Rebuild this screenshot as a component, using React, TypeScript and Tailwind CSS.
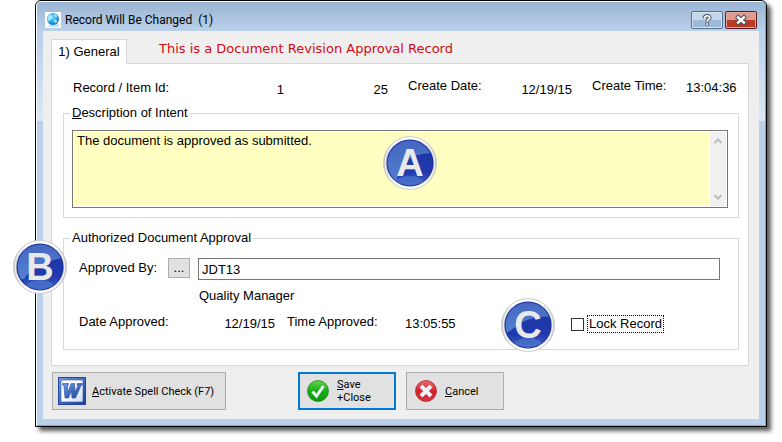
import React from 'react';

const Badge: React.FC<{ letter: string; place: string; gloss: string }> = ({ letter, place, gloss }) => {
    return (
        <div className={`absolute w-14 h-14 flex items-center justify-center ${place}`}>
            <svg className="absolute inset-0 w-full h-full" viewBox="0 0 56 56" aria-hidden="true">
                <defs>
                    <linearGradient id={`ring-${letter}`} x1="0" y1="0" x2="1" y2="0">
                        <stop offset="0" stopColor="#b4b4b4" />
                        <stop offset="0.25" stopColor="#f4f4f4" />
                        <stop offset="0.75" stopColor="#f4f4f4" />
                        <stop offset="1" stopColor="#b4b4b4" />
                    </linearGradient>
                    <linearGradient id={`disc-${letter}`} x1="0" y1="0" x2="0" y2="1">
                        <stop offset="0" stopColor="#1d37a6" />
                        <stop offset="0.7" stopColor="#2039ac" />
                        <stop offset="1" stopColor="#3f62c4" />
                    </linearGradient>
                    <linearGradient id={`gloss-${letter}`} x1="0" y1="0" x2="0" y2="1">
                        <stop offset="0" stopColor="#4264bd" />
                        <stop offset="1" stopColor="#5480d0" />
                    </linearGradient>
                    <clipPath id={`clip-${letter}`}>
                        <circle cx="28" cy="28" r="22.5" />
                    </clipPath>
                </defs>
                <circle cx="28" cy="28" r="26.5" fill={`url(#ring-${letter})`} stroke="#cfcfcf" strokeWidth="1" />
                <circle cx="28" cy="28" r="24.8" fill="none" stroke="#ffffff" strokeOpacity="0.7" strokeWidth="1.4" />
                <circle cx="28" cy="28" r="23.5" fill="#1a2f9c" />
                <circle cx="28" cy="28" r="22.5" fill={`url(#disc-${letter})`} />
                <g clipPath={`url(#clip-${letter})`}>
                    <path d={gloss} fill={`url(#gloss-${letter})`} />
                    <ellipse cx="28" cy="49" rx="15" ry="8" fill="#4a70cb" opacity="0.8" />
                </g>
            </svg>
            <span className="relative font-bold text-[38px] leading-9 text-[#e9e9ec]">{letter}</span>
        </div>
    );
};

const GlobeIcon = () => (
    <svg className="w-4 h-4 shrink-0 bg-white" viewBox="0 0 16 16" aria-hidden="true">
        <defs>
            <radialGradient id="globe" cx="0.4" cy="0.35" r="0.7">
                <stop offset="0" stopColor="#7fe6ff" />
                <stop offset="0.6" stopColor="#1fa4ea" />
                <stop offset="1" stopColor="#0a62b8" />
            </radialGradient>
        </defs>
        <ellipse cx="9" cy="13.5" rx="6" ry="1.8" fill="#bfe2f5" />
        <circle cx="8" cy="7" r="6" fill="url(#globe)" />
        <path d="M3 5c2-3 4-2 4 0S5 8 4 9 2 7 3 5zM9 2c2 0 4 2 3 3s-3 0-3-3zM9 8c2-1 4 0 3 2s-3 2-3-2z" fill="#c9f5ff" opacity="0.7" />
    </svg>
);

const WordIcon = () => (
    <svg className="w-7 h-7 shrink-0" viewBox="0 0 28 28" aria-hidden="true">
        <defs>
            <linearGradient id="word" x1="0" y1="0" x2="1" y2="1">
                <stop offset="0" stopColor="#6f9be6" />
                <stop offset="1" stopColor="#1b3f94" />
            </linearGradient>
            <linearGradient id="paper" x1="0" y1="0" x2="1" y2="1">
                <stop offset="0.4" stopColor="#ffffff" />
                <stop offset="1" stopColor="#c9d8f3" />
            </linearGradient>
        </defs>
        <rect width="28" height="28" fill="#1f469c" />
        <rect x="1" y="1" width="26" height="26" fill="url(#word)" />
        <rect x="3" y="3" width="22" height="22" fill="url(#paper)" stroke="#2a55ad" strokeWidth="0.6" />
        <path d="M4.500 6.500h6v1.500H9.400l.4 7L13.200 6.500h3.300l.6 8.500L20.300 8H19V6.500h5.500V8h-1.300L17.500 21H14l-.6-7L10.500 21H7L5.800 8H4.500z" fill="url(#word)" stroke="#274f9f" strokeWidth="0.6" />
    </svg>
);

const CheckIcon = () => (
    <svg className="w-[22px] h-[22px] shrink-0" viewBox="0 0 22 22" aria-hidden="true">
        <defs>
            <linearGradient id="green" x1="0" y1="0" x2="0" y2="1">
                <stop offset="0" stopColor="#5fd84c" />
                <stop offset="0.55" stopColor="#14a914" />
                <stop offset="1" stopColor="#0f9a10" />
            </linearGradient>
        </defs>
        <circle cx="11" cy="11" r="10.500" fill="url(#green)" stroke="#1c8f1c" strokeWidth="0.8" />
        <path d="M5.500 11.500l4 4.500L16.500 6" fill="none" stroke="#f0f3fb" strokeWidth="3" />
    </svg>
);

const CrossIcon = () => (
    <svg className="w-[22px] h-[22px] shrink-0" viewBox="0 0 22 22" aria-hidden="true">
        <defs>
            <linearGradient id="red" x1="0" y1="0" x2="0" y2="1">
                <stop offset="0" stopColor="#ea6a6c" />
                <stop offset="0.55" stopColor="#cf2128" />
                <stop offset="1" stopColor="#d8363b" />
            </linearGradient>
        </defs>
        <circle cx="11" cy="11" r="10.500" fill="url(#red)" stroke="#b3262b" strokeWidth="0.8" />
        <path d="M6 6l10 10M16 6l-10 10" stroke="#eef2fb" strokeWidth="4" />
    </svg>
);

export default function App() {
    return (
        <div className="min-h-screen bg-white pl-[35px] pr-[15px] pb-4 text-[13px] leading-4 text-black font-['Liberation_Sans',Arial,sans-serif]">
            <div className="relative rounded-t-md border border-black bg-white pl-px pt-px shadow-[4px_4px_4px_rgba(0,0,0,0.65)]">
                <div className="rounded-t-sm border-r border-b border-[#3cc3e0] px-1.5 pb-1.5 bg-[linear-gradient(to_bottom,#9ab4d2_0px,#b9d1ea_29px,#b9d1ea_31px,#dce8f5_119px,#b9d1ea_119px)]">
                    <header className="flex h-[29px] items-center gap-1 pl-0.5 pr-0.5 pt-1.5">
                        <GlobeIcon />
                        <h1 className="grow whitespace-pre text-[12px] leading-4 font-['Roboto','Open_Sans',sans-serif]">{'Record Will Be Changed  (1)'}</h1>
                        <button aria-label="Help" className="flex h-[18px] w-8 items-center justify-center rounded-xs border border-[#56718f] bg-linear-to-b from-[#c3d6ea] from-50% to-[#9db9d8] to-50% shadow-[inset_0_0_0_1px_#d5e3f1]">
                            <svg className="w-3 h-3" viewBox="0 0 12 12" fill="none">
                                <path d="M3.500 4.200C3.500 1 8.800 1 8.800 3.800C8.800 5.600 6.200 5.500 6.200 7.500M6.200 8.500v3" stroke="#4c5560" strokeWidth="3.600" />
                                <path d="M3.500 4.200C3.500 1 8.800 1 8.800 3.800C8.800 5.600 6.200 5.500 6.200 7.500M6.200 9.200v1.700" stroke="#ffffff" strokeWidth="1.700" />
                            </svg>
                        </button>
                        <button aria-label="Close" className="-ml-0.5 flex h-[18px] w-8 items-center justify-center rounded-xs border border-[#5b1a22] bg-linear-to-b from-[#dd9a8e] from-50% to-[#b93a24] to-50% shadow-[inset_0_0_0_1px_#e3aaa0]">
                            <svg className="w-3 h-3" viewBox="0 0 12 12" fill="none">
                                <path d="M1.500 2l9 8M10.500 2l-9 8" stroke="#4b4f5e" strokeWidth="4.400" />
                                <path d="M2.200 2.600l7.600 6.800M9.800 2.600l-7.600 6.800" stroke="#ffffff" strokeWidth="2.600" />
                            </svg>
                        </button>
                    </header>

                    <div className="bg-[#efefef] pl-2 pr-2.5 pt-2 pb-[9px]">
                        <div className="flex items-start">
                            <button role="tab" aria-selected="true" className="-mb-px h-[25px] w-[76px] shrink-0 border border-b-0 border-[#d9d9d9] bg-white text-center">
                                1) General
                            </button>
                            <p className="ml-8 text-[13px] leading-5 text-[#d20a14] font-['DejaVu_Sans',Verdana,sans-serif]">This is a Document Revision Approval Record</p>
                        </div>

                        <section className="border border-[#d9d9d9] bg-white pl-[11px] pr-[9px] pt-3.5 pb-[15px]">
                            <div className="flex h-5 items-end pl-2.5">
                                <span className="w-28 self-center">Record / Item Id:</span>
                                <span className="w-[99px] text-right">1</span>
                                <span className="w-[104px] text-right">25</span>
                                <span className="ml-5 w-24 self-start">Create Date:</span>
                                <span className="w-[68px] text-right">12/19/15</span>
                                <span className="ml-5 w-[94px] self-start">Create Time:</span>
                                <span className="self-center">13:04:36</span>
                            </div>

                            <fieldset className="mt-[7px] border border-[#d9d9d9] pl-2 pr-2.5 pb-[9px]">
                                <legend className="-ml-0.5 px-0.5">
                                    <label htmlFor="intent"><u>D</u>escription of Intent</label>
                                </legend>
                                <div className="mt-[9px] flex border border-[#767676] bg-white p-px">
                                    <textarea id="intent" className="block h-[74px] grow resize-none overflow-hidden bg-[#ffffc1] px-[3px] pt-px outline-none" defaultValue="The document is approved as submitted." />
                                    <div className="ml-px flex w-4 flex-col items-center justify-between bg-[#f0f0f0] py-[5px]" aria-hidden="true">
                                        <svg className="w-2 h-2" viewBox="0 0 8 8"><path d="M0.500 6L4 2.500L7.500 6" fill="none" stroke="#bcbcbc" strokeWidth="2" /></svg>
                                        <svg className="w-2 h-2" viewBox="0 0 8 8"><path d="M0.500 2L4 5.500L7.500 2" fill="none" stroke="#bcbcbc" strokeWidth="2" /></svg>
                                    </div>
                                </div>
                            </fieldset>

                            <fieldset className="mt-3 border border-[#d9d9d9] pl-2 pr-[18px] pb-[15px]">
                                <legend className="-ml-0.5 px-0.5">Authorized Document Approval</legend>
                                <div className="mt-3 flex items-start pl-[7px]">
                                    <label htmlFor="approver" className="w-[89px] shrink-0 leading-5">Approved By:</label>
                                    <button className="h-5 w-[22px] shrink-0 border border-[#adadad] bg-[#e1e1e1] text-center leading-4">...</button>
                                    <input id="approver" className="ml-2 h-[22px] grow border border-[#767676] bg-white px-[3px] outline-none" defaultValue="JDT13" />
                                </div>
                                <p className="mt-2 pl-[127px]">Quality Manager</p>
                                <div className="mt-2.5 flex h-5 items-center pl-[7px]">
                                    <span className="w-32 self-start">Date Approved:</span>
                                    <span className="w-[68px] text-right">12/19/15</span>
                                    <span className="ml-3 w-[118px] self-start">Time Approved:</span>
                                    <span>13:05:55</span>
                                    <label className="ml-auto mr-14 flex items-center gap-[3px]">
                                        <input type="checkbox" className="h-[13px] w-[13px] appearance-none border border-[#333333] bg-white" />
                                        <span className="border border-dotted border-black px-px leading-4">Lock Record</span>
                                    </label>
                                </div>
                            </fieldset>
                        </section>

                        <footer className="mt-1.5 flex pl-px text-[11px] leading-[13px] whitespace-nowrap font-['Roboto',Tahoma,sans-serif]">
                            <button className="flex h-[38px] w-[174px] items-center gap-1.5 border border-[#adadad] bg-[#e1e1e1] pl-[5px] text-left">
                                <WordIcon />
                                <span><u>A</u>ctivate Spell Check (F7)</span>
                            </button>
                            <button className="ml-[72px] flex h-[38px] w-[98px] items-center gap-2 border-2 border-[#0078d7] bg-[#e1e1e1] pl-[7px] text-left">
                                <CheckIcon />
                                <span><u>S</u>ave<br />+Close</span>
                            </button>
                            <button className="ml-2.5 flex h-[38px] w-[98px] items-center gap-2 border border-[#adadad] bg-[#e1e1e1] pl-2 text-left">
                                <CrossIcon />
                                <span><u>C</u>ancel</span>
                            </button>
                        </footer>
                    </div>
                </div>

                <Badge letter="A" place="left-[346px] top-[134px]" gloss="M0 0H56V19C34 15 16 26 14 50H0z" />
                <Badge letter="B" place="-left-6 top-[238px]" gloss="M0 0H56V18C36 20 16 32 12 40H0z" />
                <Badge letter="C" place="left-[464px] top-[296px]" gloss="M0 0H56V20C40 18 26 22 18 28S8 36 0 38z" />
            </div>
        </div>
    );
}
